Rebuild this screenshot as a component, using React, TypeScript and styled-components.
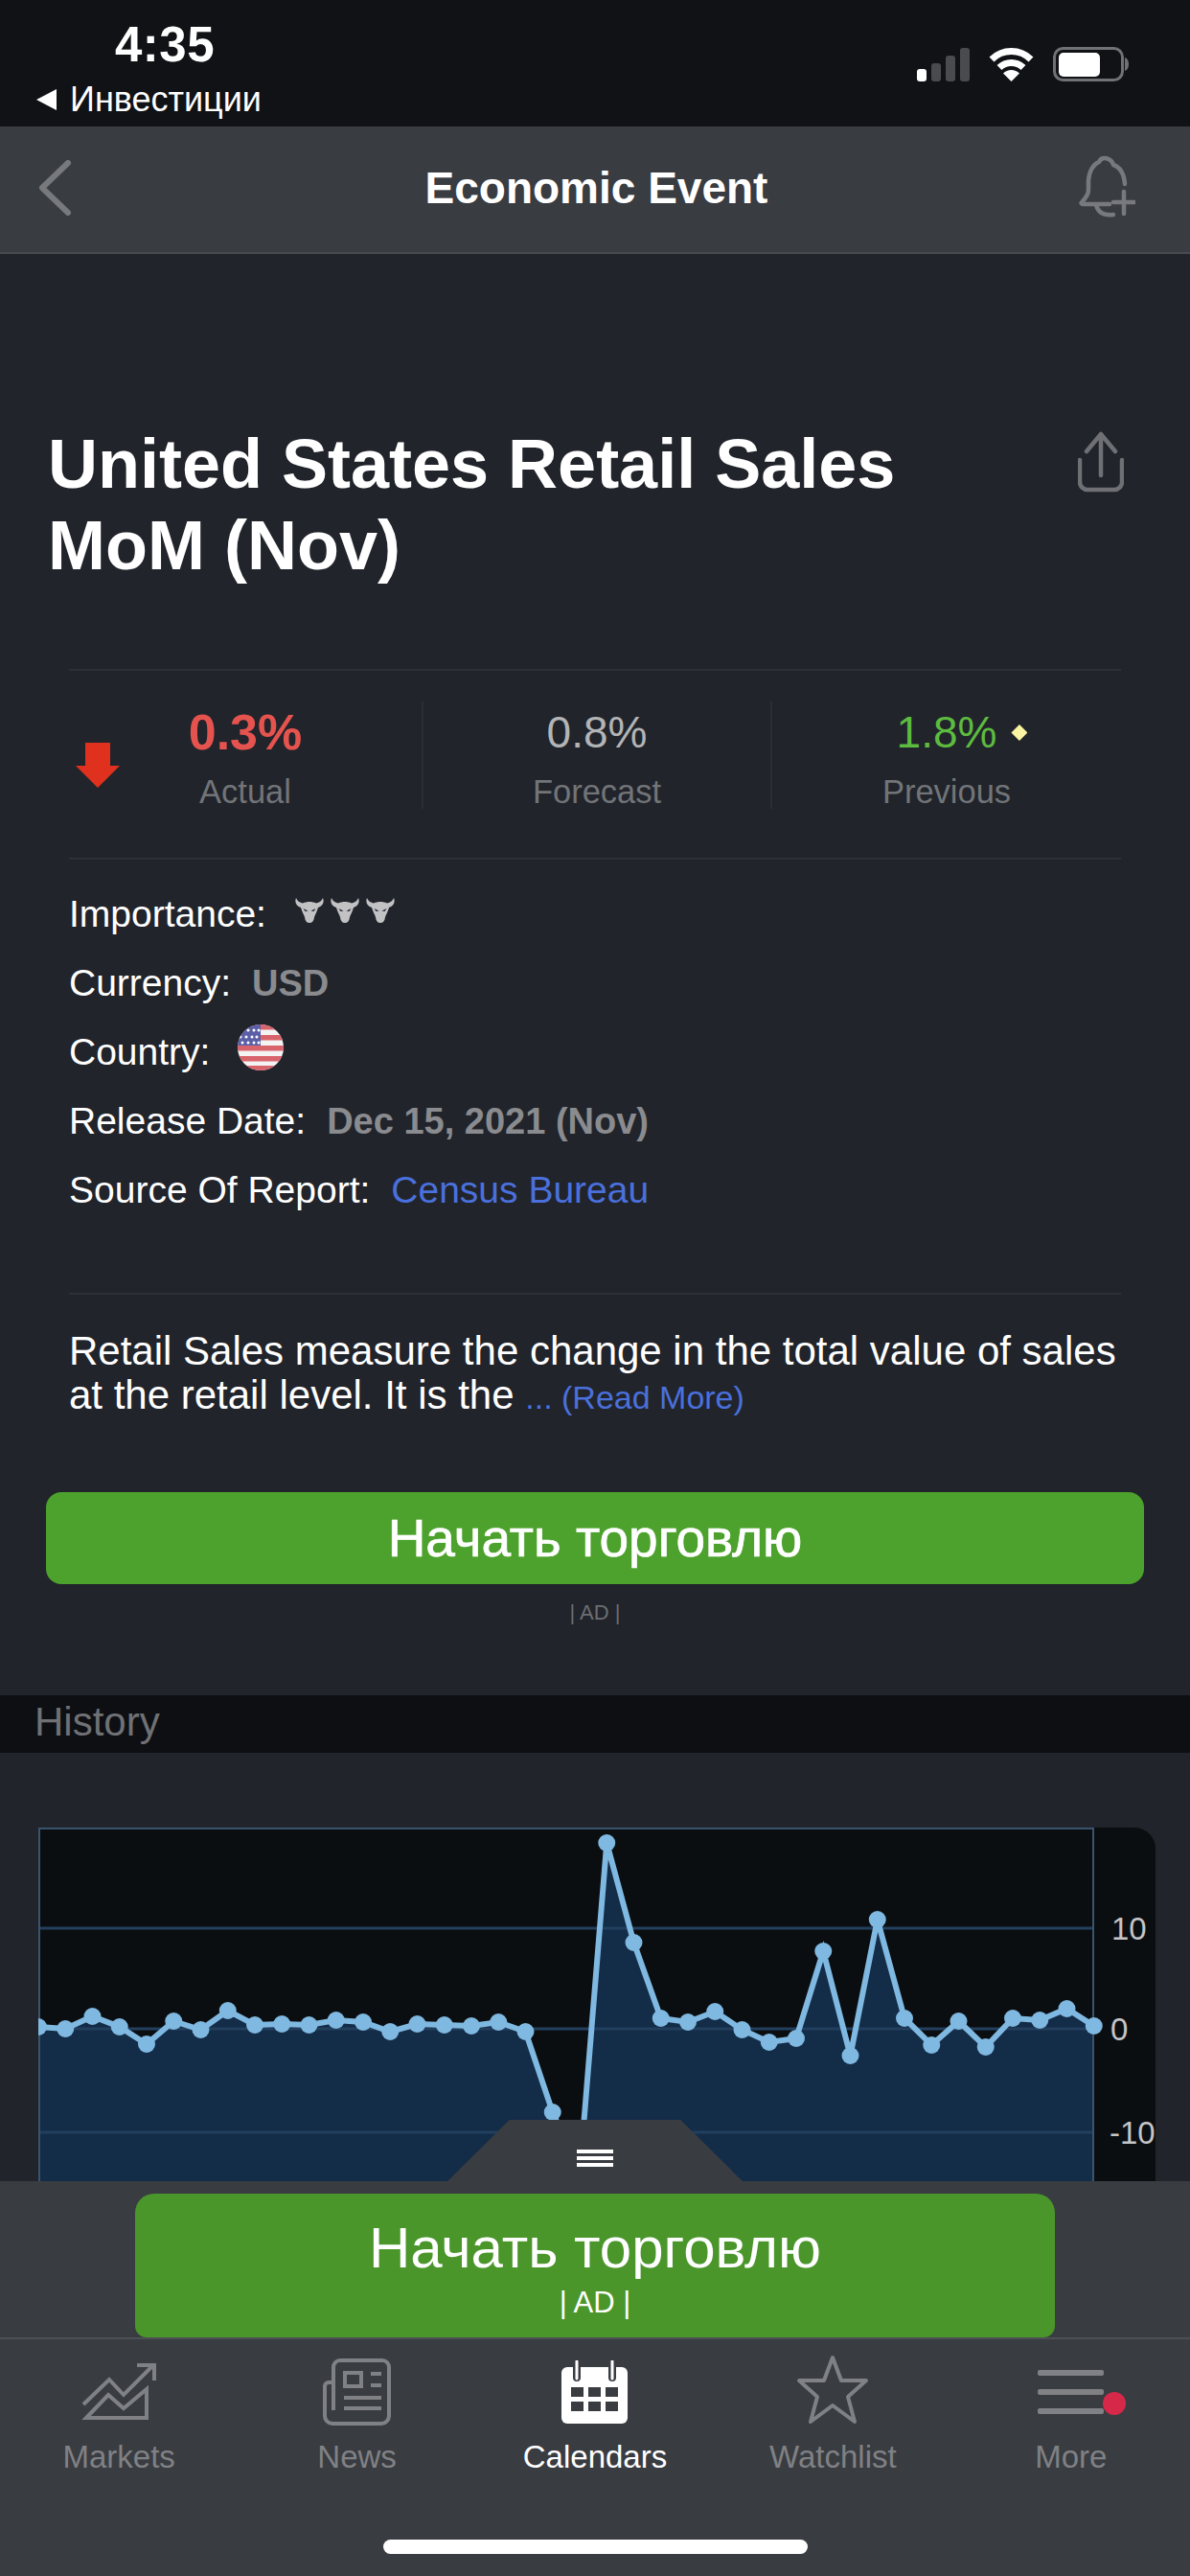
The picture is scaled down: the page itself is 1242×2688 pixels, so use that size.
import React from "react";
import styled, { createGlobalStyle } from "styled-components";

const GlobalStyle = createGlobalStyle`
  html, body {
    margin: 0;
    padding: 0;
    background: #21242b;
    font-family: "Liberation Sans", Arial, sans-serif;
  }
`;

const Page = styled.div`
  width: 1242px;
  height: 2688px;
  display: flex;
  flex-direction: column;
  overflow: hidden;
  background: #21242b;
  color: #fff;
`;

/* status bar */
const StatusBar = styled.div`
  height: 132px;
  flex: none;
  box-sizing: border-box;
  background: #101216;
  display: flex;
  justify-content: space-between;
  padding: 0 64px 0 38px;
`;

const StatusLeft = styled.div`
  display: flex;
  flex-direction: column;
  align-items: flex-start;
`;

const Clock = styled.div`
  margin: 18px 0 0 82px;
  font-size: 51px;
  line-height: 58px;
  font-weight: 700;
  letter-spacing: 0.5px;
`;

const BackApp = styled.div`
  display: flex;
  align-items: center;
  gap: 14px;
  margin-top: 8px;
  font-size: 36px;
  line-height: 40px;
`;

const StatusIcons = styled.div`
  display: flex;
  align-items: flex-start;
  gap: 20px;
  padding-top: 49px;
`;

/* nav */
const NavBar = styled.div`
  height: 133px;
  flex: none;
  box-sizing: border-box;
  background: #393c41;
  border-bottom: 2px solid #484b50;
  display: flex;
  align-items: center;
  justify-content: space-between;
  padding: 0 57px 4px 40px;
`;

const NavTitle = styled.div`
  flex: 1;
  padding-left: 46px;
  text-align: center;
  font-size: 46px;
  font-weight: 700;
`;

/* scrolled content */
const Scroll = styled.div`
  flex: 1;
  min-height: 0;
  overflow: hidden;
`;

const TitleRow = styled.div`
  display: flex;
  justify-content: space-between;
  align-items: flex-start;
  padding: 177px 69px 0 50px;
`;

const Title = styled.h1`
  margin: 0;
  width: 960px;
  font-size: 72px;
  line-height: 85px;
  font-weight: 700;
`;

const ShareIcon = styled.svg`
  margin-top: 8px;
`;

const Stats = styled.div`
  margin: 86px 72px 0;
  height: 163px;
  border-top: 2px solid #2d3036;
  border-bottom: 2px solid #2d3036;
  display: grid;
  grid-template-columns: 368px 364px 366px;
  padding-top: 32px;
`;

const StatCell = styled.div<{ $divided?: boolean }>`
  position: relative;
  height: 112px;
  display: flex;
  flex-direction: column;
  align-items: center;
  border-left: ${(p) => (p.$divided ? "2px solid #2a2d33" : "none")};
`;

const StatValue = styled.div<{ $color: string; $big?: boolean }>`
  position: relative;
  margin-top: 4px;
  font-size: ${(p) => (p.$big ? "52px" : "46px")};
  font-weight: ${(p) => (p.$big ? 700 : 400)};
  line-height: 56px;
  color: ${(p) => p.$color};
`;

const StatLabel = styled.div`
  margin-top: 14px;
  font-size: 34.5px;
  line-height: 40px;
  color: #727478;
`;

const DownArrow = styled.svg`
  position: absolute;
  left: 7px;
  top: 43px;
`;

const Diamond = styled.span`
  position: absolute;
  left: calc(100% + 15px);
  top: 20px;
  width: 17px;
  height: 17px;
  background: #fbf4a2;
  clip-path: polygon(50% 0, 100% 50%, 50% 100%, 0 50%);
`;

const InfoList = styled.div`
  margin: 21px 72px 0;
  padding-bottom: 71px;
  border-bottom: 2px solid #2d3036;
`;

const InfoRow = styled.div`
  height: 72px;
  display: flex;
  align-items: center;
  gap: 22px;
  font-size: 39px;
`;

const InfoValue = styled.span`
  color: #8a8b8e;
  font-weight: 700;
  font-size: 38px;
`;

const InfoLink = styled.span`
  color: #4a70dc;
`;

const Bulls = styled.div`
  display: flex;
  gap: 7px;
  margin: -8px 0 0 8px;
`;

const FlagWrap = styled.div`
  margin: -10px 0 0 7px;
`;

const Description = styled.p`
  margin: 36px 72px 0;
  font-size: 42px;
  line-height: 46px;
  white-space: nowrap;
`;

const ReadMore = styled.span`
  color: #4a70dc;
  font-size: 34px;
`;

const TradeButton = styled.div`
  margin: 76px 48px 0;
  height: 96px;
  border-radius: 16px;
  background: #4ca22c;
  display: flex;
  align-items: center;
  justify-content: center;
  font-size: 55px;
  -webkit-text-stroke: 0.7px #fff;
`;

const AdNote = styled.div`
  margin-top: 17px;
  text-align: center;
  font-size: 22px;
  line-height: 26px;
  color: #6c6e72;
`;

const SectionBar = styled.div`
  margin-top: 73px;
  height: 60px;
  background: #0d0f13;
  padding-left: 36px;
  font-size: 42px;
  line-height: 56px;
  color: #6f7175;
`;

const ChartPanel = styled.div`
  margin: 78px 36px 0 40px;
  height: 400px;
  background: #0b0e11;
  border-top-right-radius: 22px;
  overflow: hidden;
`;

/* footer */
const Footer = styled.div`
  position: relative;
  flex: none;
  height: 412px;
  background: #393c41;
`;

const Handle = styled.div`
  position: absolute;
  left: 467px;
  bottom: 100%;
  width: 308px;
  height: 64px;
  background: #393c41;
  clip-path: polygon(21% 0, 79% 0, 100% 100%, 0 100%);
  display: flex;
  flex-direction: column;
  align-items: center;
  gap: 3px;
  padding-top: 31px;
  box-sizing: border-box;
`;

const HandleLine = styled.span`
  width: 38px;
  height: 4px;
  background: #fff;
`;

const AdBanner = styled.div`
  margin: 13px 141px 0;
  height: 150px;
  box-sizing: border-box;
  padding-top: 23px;
  border-radius: 20px 20px 12px 12px;
  background: #4a962b;
  display: flex;
  flex-direction: column;
  align-items: center;
`;

const AdTitle = styled.div`
  font-size: 60px;
  line-height: 68px;
`;

const AdSmall = styled.div`
  margin-top: 7px;
  font-size: 31px;
  line-height: 32px;
`;

const TabBar = styled.div`
  border-top: 2px solid #4c4f54;
  display: grid;
  grid-template-columns: repeat(5, 1fr);
`;

const Tab = styled.div<{ $active?: boolean }>`
  position: relative;
  padding-top: 17px;
  display: flex;
  flex-direction: column;
  align-items: center;
  color: ${(p) => (p.$active ? "#fff" : "#808184")};
`;

const TabIcon = styled.div`
  height: 76px;
  display: flex;
  align-items: center;
  justify-content: center;
`;

const TabLabel = styled.div`
  margin-top: 12px;
  font-size: 33px;
  line-height: 36px;
`;

const Dot = styled.span`
  position: absolute;
  left: 157px;
  top: 55px;
  width: 24px;
  height: 24px;
  border-radius: 50%;
  background: #d6294a;
`;

const HomeBar = styled.div`
  margin: 68px auto 0;
  width: 443px;
  height: 15px;
  border-radius: 8px;
  background: #fff;
`;

const GREY = "#77797d";
const TAB_GREY = "#808184";

const SignalIcon = () => (
  <svg width="55" height="36" viewBox="0 0 55 36">
    <rect x="0" y="23" width="10" height="13" rx="3" fill="#fff" />
    <rect x="15" y="17" width="10" height="19" rx="3" fill="#4a4b4e" />
    <rect x="30" y="9" width="10" height="27" rx="3" fill="#4a4b4e" />
    <rect x="45" y="1" width="10" height="35" rx="3" fill="#4a4b4e" />
  </svg>
);

const WifiIcon = () => (
  <svg width="47" height="36" viewBox="0 0 47 36" fill="none" stroke="#fff" strokeWidth="7">
    <path d="M3 13a29 29 0 0 1 41 0" />
    <path d="M11 21.500a18 18 0 0 1 25 0" />
    <path d="M23.500 36l-8.500-8.500a12 12 0 0 1 17 0z" fill="#fff" stroke="none" />
  </svg>
);

const BatteryIcon = () => (
  <svg width="79" height="36" viewBox="0 0 79 36">
    <rect x="1.500" y="1.500" width="71" height="33" rx="9" fill="none" stroke="#6f7174" strokeWidth="3" />
    <rect x="6" y="6" width="43" height="25" rx="5" fill="#fff" />
    <path d="M75 11c3 1 4 4 4 7s-1 6-4 7z" fill="#6f7174" />
  </svg>
);

const BullIcon = () => (
  <svg width="30" height="26" viewBox="0 0 30 26">
    <path
      fill="#c2c2c4"
      d="M1 0C-1 5 2 9 6 10c1 4 3 7 4 10 .5 4 2 6 5 6s4.500-2 5-6c1-3 3-6 4-10 4-1 7-5 5-10-1 3-4 5-7 5.500-4-2-10-2-14 0C5 5 2 3 1 0z"
    />
    <path fill="#21242b" d="M8.500 11l5 2.500-3 .5zM21.500 11l-5 2.500 3 .5z" />
  </svg>
);

const UsFlag = () => (
  <svg width="48" height="48" viewBox="0 0 48 48" style={{ display: "block" }}>
    <clipPath id="flag-clip">
      <circle cx="24" cy="24" r="24" />
    </clipPath>
    <g clipPath="url(#flag-clip)">
      <rect width="48" height="48" fill="#f3f3f3" />
      {[0, 11, 22, 33, 43].map((y) => (
        <rect key={y} x="0" y={y} width="48" height="5.500" fill="#d9636b" />
      ))}
      <rect width="24" height="22" fill="#5a5fa8" />
      {[6, 13, 19].map((y, row) =>
        [5, 11, 17, 22].map((x) => (
          <circle key={`${x}-${y}`} cx={row === 1 ? x - 2 : x} cy={y} r="1.500" fill="#fff" />
        ))
      )}
    </g>
  </svg>
);

// y of each reading, in px from the top of the plot
const HISTORY = [
  208, 210, 197, 208, 226, 202, 211, 191, 206, 205, 206, 201, 203, 213, 205, 206, 207, 203, 213, 297,
  361, 16, 120, 199, 203, 192, 211, 224, 220, 129, 238, 96, 199, 227, 202, 229, 199, 201, 189, 207,
];
const STEP = 28.25;
const PLOT_W = 1101;

const HistoryChart = () => {
  const pts = HISTORY.map((y, i) => [i * STEP, y]);
  const line = pts.map((p) => p.join(",")).join(" ");
  return (
    <svg width="1166" height="400" viewBox="0 0 1166 400" style={{ display: "block" }}>
      <polygon points={`0,400 ${line} ${pts[39][0]},400`} fill="#132c48" />
      {[105, 210, 318].map((y) => (
        <line key={y} x1="0" x2={PLOT_W} y1={y} y2={y} stroke="#223f5e" strokeWidth="3" />
      ))}
      <path d={`M1 400V1H${PLOT_W}V400`} fill="none" stroke="#3a546e" strokeWidth="2" />
      <polyline points={line} fill="none" stroke="#7fb8e0" strokeWidth="6" />
      {pts.map(([x, y]) => (
        <circle key={x} cx={x} cy={y} r="9" fill="#7fb8e0" />
      ))}
      <g fill="#c4c5c7" fontSize="33" fontFamily="Liberation Sans, sans-serif">
        <text x="1120" y="117">10</text>
        <text x="1119" y="222">0</text>
        <text x="1118" y="330">-10</text>
      </g>
    </svg>
  );
};

const MarketsIcon = () => (
  <svg width="78" height="60" viewBox="25 20 78 60" fill="none" stroke={TAB_GREY} strokeWidth="4">
    <path d="M27 63l27-26 15 16 30-30" />
    <path d="M83 22h18v16" />
    <path d="M30 77l23-24 16 14 24-20v30z" />
  </svg>
);

const NewsIcon = () => (
  <svg width="75" height="74" viewBox="275 13 75 74" fill="none" stroke={TAB_GREY} strokeWidth="4">
    <path d="M288 69V24a7 7 0 0 1 7-7h44a7 7 0 0 1 7 7v51a8 8 0 0 1-8 8h-51a8 8 0 0 1-8-8V44a4 4 0 0 1 4-4h5" />
    <rect x="300" y="30" width="17" height="14" />
    <path d="M327 31h11M327 43h11M299 56h39M299 67h39" />
  </svg>
);

const CalendarIcon = () => (
  <svg width="69" height="66" viewBox="0 0 69 66">
    <rect x="0" y="7" width="69" height="59" rx="6" fill="#fff" />
    <g stroke="#393c41" strokeWidth="8" strokeLinecap="round">
      <path d="M16 2v16M53 2v16" />
    </g>
    <g stroke="#fff" strokeWidth="3" strokeLinecap="round">
      <path d="M16 1v18M53 1v18" />
    </g>
    {[28, 43].map((y) =>
      [10, 28, 46].map((x) => <rect key={`${x}-${y}`} x={x} y={y} width="13" height="10" fill="#393c41" />)
    )}
  </svg>
);

const StarIcon = () => (
  <svg width="74" height="71" viewBox="0 3 74 71" fill="none" stroke={TAB_GREY} strokeWidth="4" strokeLinejoin="round" overflow="visible">
    <path d="M37 2l9 24h26L53 43l7 26-23-17-23 17 7-26L2 26h26z" />
  </svg>
);

const MoreIcon = () => (
  <svg width="70" height="46" viewBox="0 0 70 46" fill={TAB_GREY}>
    <rect x="0" y="0" width="69" height="6" rx="2" />
    <rect x="0" y="20" width="69" height="6" rx="2" />
    <rect x="0" y="40" width="69" height="6" rx="2" />
  </svg>
);

const App: React.FC = () => {
  return (
    <Page>
      <GlobalStyle />
      <StatusBar>
        <StatusLeft>
          <Clock>4:35</Clock>
          <BackApp>
            <svg width="21" height="22" viewBox="0 0 21 22">
              <path d="M21 0v22L0 11z" fill="#fff" />
            </svg>
            Инвестиции
          </BackApp>
        </StatusLeft>
        <StatusIcons>
          <SignalIcon />
          <WifiIcon />
          <BatteryIcon />
        </StatusIcons>
      </StatusBar>

      <NavBar>
        <svg width="34" height="58" viewBox="0 0 34 58" fill="none" stroke={GREY} strokeWidth="6" strokeLinecap="round" strokeLinejoin="round">
          <path d="M31 3L4 29l27 26" />
        </svg>
        <NavTitle>Economic Event</NavTitle>
        <svg width="60" height="70" viewBox="33 13 60 70" fill="none" stroke={GREY} strokeWidth="4.500" strokeLinecap="round" strokeLinejoin="round">
          <path d="M82 44c-1-12-6-18-12-20-2-7-12-10-15-3-7 3-10 10-11 19v10c0 5-3 9-7 13-1 1 0 2 1 2h28" />
          <path d="M52 66c2 8 8 11 18 10" />
          <path d="M81 52v23M70 63h22" />
        </svg>
      </NavBar>

      <Scroll>
        <TitleRow>
          <Title>United States Retail Sales MoM (Nov)</Title>
          <ShareIcon width="48" height="64" viewBox="25 20 48 64" fill="none" stroke="#6e7074" strokeWidth="4.500" strokeLinecap="round" strokeLinejoin="round">
            <path d="M27 50v23a8 8 0 0 0 8 8h28a8 8 0 0 0 8-8V50" />
            <path d="M49 66V23M34 41l15-18 15 18" />
          </ShareIcon>
        </TitleRow>

        <Stats>
          <StatCell>
            <DownArrow width="46" height="47" viewBox="0 0 46 47">
              <path d="M10 0h26v24h10L23 47 0 24h10z" fill="#e0301e" />
            </DownArrow>
            <StatValue $color="#e5534f" $big>0.3%</StatValue>
            <StatLabel>Actual</StatLabel>
          </StatCell>
          <StatCell $divided>
            <StatValue $color="#b3b4b6">0.8%</StatValue>
            <StatLabel>Forecast</StatLabel>
          </StatCell>
          <StatCell $divided>
            <StatValue $color="#5dbb3f">
              1.8%
              <Diamond />
            </StatValue>
            <StatLabel>Previous</StatLabel>
          </StatCell>
        </Stats>

        <InfoList>
          <InfoRow>
            Importance:
            <Bulls>
              <BullIcon />
              <BullIcon />
              <BullIcon />
            </Bulls>
          </InfoRow>
          <InfoRow>
            Currency:
            <InfoValue>USD</InfoValue>
          </InfoRow>
          <InfoRow>
            Country:
            <FlagWrap>
              <UsFlag />
            </FlagWrap>
          </InfoRow>
          <InfoRow>
            Release Date:
            <InfoValue>Dec 15, 2021 (Nov)</InfoValue>
          </InfoRow>
          <InfoRow>
            Source Of Report:
            <InfoLink>Census Bureau</InfoLink>
          </InfoRow>
        </InfoList>

        <Description>
          Retail Sales measure the change in the total value of sales
          <br />
          at the retail level. It is the <ReadMore>... (Read More)</ReadMore>
        </Description>

        <TradeButton>Начать торговлю</TradeButton>
        <AdNote>| AD |</AdNote>

        <SectionBar>History</SectionBar>
        <ChartPanel>
          <HistoryChart />
        </ChartPanel>
      </Scroll>

      <Footer>
        <Handle>
          <HandleLine />
          <HandleLine />
          <HandleLine />
        </Handle>
        <AdBanner>
          <AdTitle>Начать торговлю</AdTitle>
          <AdSmall>| AD |</AdSmall>
        </AdBanner>
        <TabBar>
          <Tab>
            <TabIcon><MarketsIcon /></TabIcon>
            <TabLabel>Markets</TabLabel>
          </Tab>
          <Tab>
            <TabIcon><NewsIcon /></TabIcon>
            <TabLabel>News</TabLabel>
          </Tab>
          <Tab $active>
            <TabIcon><CalendarIcon /></TabIcon>
            <TabLabel>Calendars</TabLabel>
          </Tab>
          <Tab>
            <TabIcon><StarIcon /></TabIcon>
            <TabLabel>Watchlist</TabLabel>
          </Tab>
          <Tab>
            <TabIcon><MoreIcon /></TabIcon>
            <Dot />
            <TabLabel>More</TabLabel>
          </Tab>
        </TabBar>
        <HomeBar />
      </Footer>
    </Page>
  );
};

export default App;
